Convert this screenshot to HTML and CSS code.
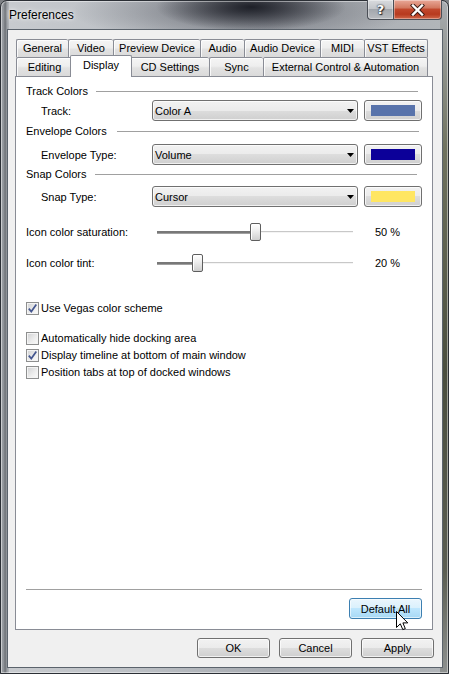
FILE: index.html
```html
<!DOCTYPE html>
<html>
<head>
<meta charset="utf-8">
<title>Preferences</title>
<link rel="stylesheet" href="styles.css">
</head>
<body>
<div class="window">
  <div class="titlebar">
    <span class="title">Preferences</span>
    <div class="caption">
      <div class="cbtn help"><span>?</span></div>
      <div class="cbtn close">
        <svg width="15" height="12" viewBox="0 0 15 12"><path d="M3 1.5 L12 10.5 M12 1.5 L3 10.5" stroke="#3a1a14" stroke-width="4.2" stroke-linecap="square"/><path d="M3 1.5 L12 10.5 M12 1.5 L3 10.5" stroke="#ffffff" stroke-width="2.4" stroke-linecap="square"/></svg>
      </div>
    </div>
  </div>
  <div class="client">
    <div class="tabs">
      <div class="tabrow row1">
        <div class="tab">General</div>
        <div class="tab">Video</div>
        <div class="tab">Preview Device</div>
        <div class="tab">Audio</div>
        <div class="tab">Audio Device</div>
        <div class="tab">MIDI</div>
        <div class="tab">VST Effects</div>
      </div>
      <div class="tabrow row2">
        <div class="tab">Editing</div>
        <div class="tab sel">Display</div>
        <div class="tab">CD Settings</div>
        <div class="tab">Sync</div>
        <div class="tab">External Control &amp; Automation</div>
      </div>
    </div>
    <div class="panel">
      <div class="group g1"><span>Track Colors</span><i class="rule"></i></div>
      <div class="field f1">
        <span class="flabel">Track:</span>
        <div class="combo"><span>Color A</span><svg class="arrow" width="7" height="4" viewBox="0 0 7 4"><path d="M0 0 H7 L3.5 4 Z" fill="#000"/></svg></div>
        <div class="swatchbtn"><i class="swatch sw-track"></i></div>
      </div>
      <div class="group g2"><span>Envelope Colors</span><i class="rule"></i></div>
      <div class="field f2">
        <span class="flabel">Envelope Type:</span>
        <div class="combo"><span>Volume</span><svg class="arrow" width="7" height="4" viewBox="0 0 7 4"><path d="M0 0 H7 L3.5 4 Z" fill="#000"/></svg></div>
        <div class="swatchbtn"><i class="swatch sw-env"></i></div>
      </div>
      <div class="group g3"><span>Snap Colors</span><i class="rule"></i></div>
      <div class="field f3">
        <span class="flabel">Snap Type:</span>
        <div class="combo"><span>Cursor</span><svg class="arrow" width="7" height="4" viewBox="0 0 7 4"><path d="M0 0 H7 L3.5 4 Z" fill="#000"/></svg></div>
        <div class="swatchbtn"><i class="swatch sw-snap"></i></div>
      </div>

      <div class="srow s1">
        <span class="slabel">Icon color saturation:</span>
        <div class="slider" style="--v:50%"><i class="fill"></i><i class="rest"></i><i class="thumb"></i></div>
        <span class="sval">50 %</span>
      </div>
      <div class="srow s2">
        <span class="slabel">Icon color tint:</span>
        <div class="slider" style="--v:20.5%"><i class="fill"></i><i class="rest"></i><i class="thumb"></i></div>
        <span class="sval">20 %</span>
      </div>

      <div class="check c1"><span class="box"><svg width="11" height="11" viewBox="0 0 11 11"><path d="M1.8 5.6 L4.3 8.6 L9.3 1.6" fill="none" stroke="#44568f" stroke-width="1.7"/></svg></span><span>Use Vegas color scheme</span></div>
      <div class="check c2"><span class="box"></span><span>Automatically hide docking area</span></div>
      <div class="check c3"><span class="box"><svg width="11" height="11" viewBox="0 0 11 11"><path d="M1.8 5.6 L4.3 8.6 L9.3 1.6" fill="none" stroke="#44568f" stroke-width="1.7"/></svg></span><span>Display timeline at bottom of main window</span></div>
      <div class="check c4"><span class="box"></span><span>Position tabs at top of docked windows</span></div>

      <div class="panel-bottom">
        <div class="sep"></div>
        <div class="defrow">
          <div class="btn hot">Default All
            <svg class="cursor" width="13" height="20" viewBox="0 0 13 20"><path d="M0.5 0.5 L0.5 16.5 L4.3 12.8 L6.8 18.6 L9.3 17.6 L6.9 11.9 L11.8 11.9 Z" fill="#fff" stroke="#000" stroke-width="1" stroke-linejoin="miter"/></svg>
          </div>
        </div>
      </div>
    </div>
    <div class="footer">
      <div class="btn">OK</div>
      <div class="btn">Cancel</div>
      <div class="btn">Apply</div>
    </div>
  </div>
</div>
</body>
</html>
```

FILE: styles.css
```css
* { box-sizing: border-box; }

html, body {
  margin: 0;
  padding: 0;
}

body {
  width: 449px;
  height: 674px;
  overflow: hidden;
  font-family: "Liberation Sans", Arial, sans-serif;
  font-size: 11px;
  color: #000;
  background: #7d8084;
}

.window {
  width: 449px;
  height: 674px;
  border: 1px solid #2b2f35;
  border-radius: 7px 7px 0 0;
  padding: 0 6px 6px 7px;
  display: flex;
  flex-direction: column;
  box-shadow: inset 0 0 0 1px rgba(255, 255, 255, 0.45);
  background:
    radial-gradient(ellipse 95px 24px at 250px 6px, rgba(22, 24, 32, 0.92), rgba(22, 24, 32, 0) 100%),
    radial-gradient(ellipse 170px 32px at 240px 10px, rgba(60, 62, 72, 0.55), rgba(60, 62, 72, 0) 100%),
    linear-gradient(#a9adb2, #70735f 22%, #4a4e3e 55%, #5b5e52 85%, #8e9190) right top / 8px 100% no-repeat,
    linear-gradient(to right, #a2a6ab 0, #8d9196 3px, #6a6e73 4px, #9a9ea3 6px, #b4b8bc 8px) left top / 8px 100% no-repeat,
    linear-gradient(to right, #c8cbcf, #bcc0c5 30%, #a7abb1 60%, #b2b6ba 100%);
}

/* ---------- title bar ---------- */
.titlebar {
  height: 29px;
  display: flex;
  align-items: flex-start;
}

.title {
  margin: 7px 0 0 1px;
  font-size: 12px;
  line-height: 15px;
  color: #000;
  text-shadow: 0 0 6px rgba(255, 255, 255, 0.9), 0 0 3px rgba(255, 255, 255, 0.8);
}

.caption {
  margin-left: auto;
  margin-top: -1px;
  display: flex;
}

.cbtn {
  height: 20px;
  display: flex;
  align-items: center;
  justify-content: center;
  border: 1px solid #4a4e56;
  border-top: none;
  box-shadow: inset 0 0 0 1px rgba(255, 255, 255, 0.35);
}

.help {
  width: 26px;
  border-right: none;
  border-radius: 0 0 0 4px;
  background: linear-gradient(#d9dbde, #c3c6ca 45%, #a3a7ad 50%, #b9bcc0);
  font-family: "DejaVu Sans", sans-serif;
  font-weight: bold;
  font-size: 13px;
  color: #fff;
  text-shadow: 0 0 2px #2a2d33, 0 0 1px #2a2d33, 1px 1px 1px #2a2d33;
}

.close {
  width: 49px;
  border-radius: 0 0 4px 0;
  background: linear-gradient(#e9a898, #d37a62 40%, #c1472c 50%, #b73a1f 75%, #d0674a);
}

/* ---------- client ---------- */
.client {
  height: 637px;
  background: #f0f0f0;
  outline: 1px solid #5b636c;
  padding: 9px 8px 0 7px;
}

.tabs {
  margin-left: 1px;
}

.tabrow {
  display: grid;
  width: 412px;
}

.row1 {
  height: 18px;
  grid-template-columns: 52px 45px 87px 44px 76px 44px 64px;
}

.row2 {
  height: 19px;
  grid-template-columns: 56px 58px 79px 54px 165px;
}

.tab {
  border: 1px solid #898c95;
  border-bottom: none;
  border-right: none;
  border-radius: 2px 2px 0 0;
  background: linear-gradient(#f5f5f5, #eeeeee 45%, #e2e2e2 55%, #dadada);
  box-shadow: inset 1px 1px 0 rgba(255, 255, 255, 0.8);
  display: flex;
  align-items: center;
  justify-content: center;
  white-space: nowrap;
  line-height: 13px;
}

.tab:last-child {
  border-right: 1px solid #898c95;
}

.tab.sel {
  position: relative;
  z-index: 1;
  margin: -2px -2px -1px -2px;
  border-right: 1px solid #898c95;
  background: #fff;
  box-shadow: none;
  padding-bottom: 3px;
}

/* ---------- panel ---------- */
.panel {
  width: 418px;
  height: 554px;
  border: 1px solid #898c95;
  background: #fff;
  padding: 7px 10px 10px 10px;
  display: flex;
  flex-direction: column;
}

.group {
  display: flex;
  align-items: center;
  height: 14px;
  white-space: nowrap;
}

.group .rule {
  flex: 1;
  height: 1px;
  background: #a0a0a0;
  margin: 0 4px 0 8px;
}

.g2 { margin-top: 3px; }
.g2 .rule { margin-left: 10px; margin-right: 3px; }
.g3 { margin-top: 2px; }
.g3 .rule { margin-right: 5px; }

.field {
  display: flex;
  align-items: center;
  height: 21px;
}

.f1 { margin-top: 2px; }
.f2 { margin-top: 6px; }
.f3 { margin-top: 5px; }

.flabel {
  width: 126px;
  padding-left: 15px;
  white-space: nowrap;
}

.combo,
.swatchbtn,
.btn {
  border: 1px solid #707070;
  border-radius: 3px;
  background: linear-gradient(#f2f2f2, #ebebeb 50%, #dddddd 50%, #cfcfcf);
  box-shadow: inset 0 0 0 1px rgba(255, 255, 255, 0.7);
}

.combo {
  width: 206px;
  height: 21px;
  display: flex;
  align-items: center;
  padding-left: 2px;
}

.combo .arrow {
  margin-left: auto;
  margin-right: 3px;
}

.swatchbtn {
  width: 58px;
  height: 21px;
  margin-left: 6px;
  display: flex;
  align-items: center;
  justify-content: center;
}

.swatch {
  width: 44px;
  height: 11px;
}

.sw-track { background: #5873ab; }
.sw-env { background: #0c0099; }
.sw-snap { background: #ffe662; }

/* ---------- sliders ---------- */
.srow {
  display: flex;
  align-items: center;
  height: 18px;
}

.s1 { margin-top: 16px; }
.s2 { margin-top: 13px; }

.slabel {
  width: 131px;
  white-space: nowrap;
}

.slider {
  position: relative;
  width: 196px;
  height: 18px;
  display: flex;
  align-items: center;
}

.slider .fill {
  width: var(--v);
  height: 3px;
  background: #787878;
  border-bottom: 1px solid #a0a0a0;
}

.slider .rest {
  flex: 1;
  height: 2px;
  background: #c8c8c8;
  border-bottom: 1px solid #f4f4f4;
}

.slider .thumb {
  position: absolute;
  left: calc(var(--v) - 5px);
  top: 0;
  width: 11px;
  height: 18px;
  border: 1px solid #5e5e5e;
  border-radius: 2px;
  background: linear-gradient(#ffffff, #f0f0f0 40%, #dadada 80%, #cfcfcf);
  box-shadow: inset 1px 1px 0 #ffffff;
}

.sval {
  margin-left: 22px;
  white-space: nowrap;
}

/* ---------- checkboxes ---------- */
.check {
  display: flex;
  align-items: center;
  height: 16px;
  white-space: nowrap;
}

.c1 { margin-top: 28px; }
.c2 { margin-top: 14px; }
.c3 { margin-top: 1px; }
.c4 { margin-top: 1px; }

.box {
  width: 13px;
  height: 13px;
  margin-right: 2px;
  border: 1px solid #8e8f8f;
  background: linear-gradient(135deg, #cfd0d2, #eeeeee 60%, #fbfbfb);
  box-shadow: inset 0 0 0 1px #f4f4f4;
  display: flex;
  align-items: center;
  justify-content: center;
}

/* ---------- panel bottom ---------- */
.panel-bottom {
  margin-top: auto;
}

.sep {
  height: 1px;
  background: #a0a0a0;
  margin-bottom: 8px;
}

.defrow {
  display: flex;
  justify-content: flex-end;
}

.btn {
  width: 73px;
  height: 20px;
  display: flex;
  align-items: center;
  justify-content: center;
  white-space: nowrap;
}

.btn.hot {
  position: relative;
  height: 21px;
  border-color: #3c7fb1;
  background: linear-gradient(#eaf6fd, #d9f0fc 50%, #bee6fd 50%, #a7d9f5);
  box-shadow: inset 0 0 0 1px rgba(255, 255, 255, 0.6);
}

.cursor {
  position: absolute;
  left: 46px;
  top: 12px;
}

.footer {
  display: flex;
  justify-content: flex-end;
  gap: 9px;
  margin-top: 8px;
}
```
